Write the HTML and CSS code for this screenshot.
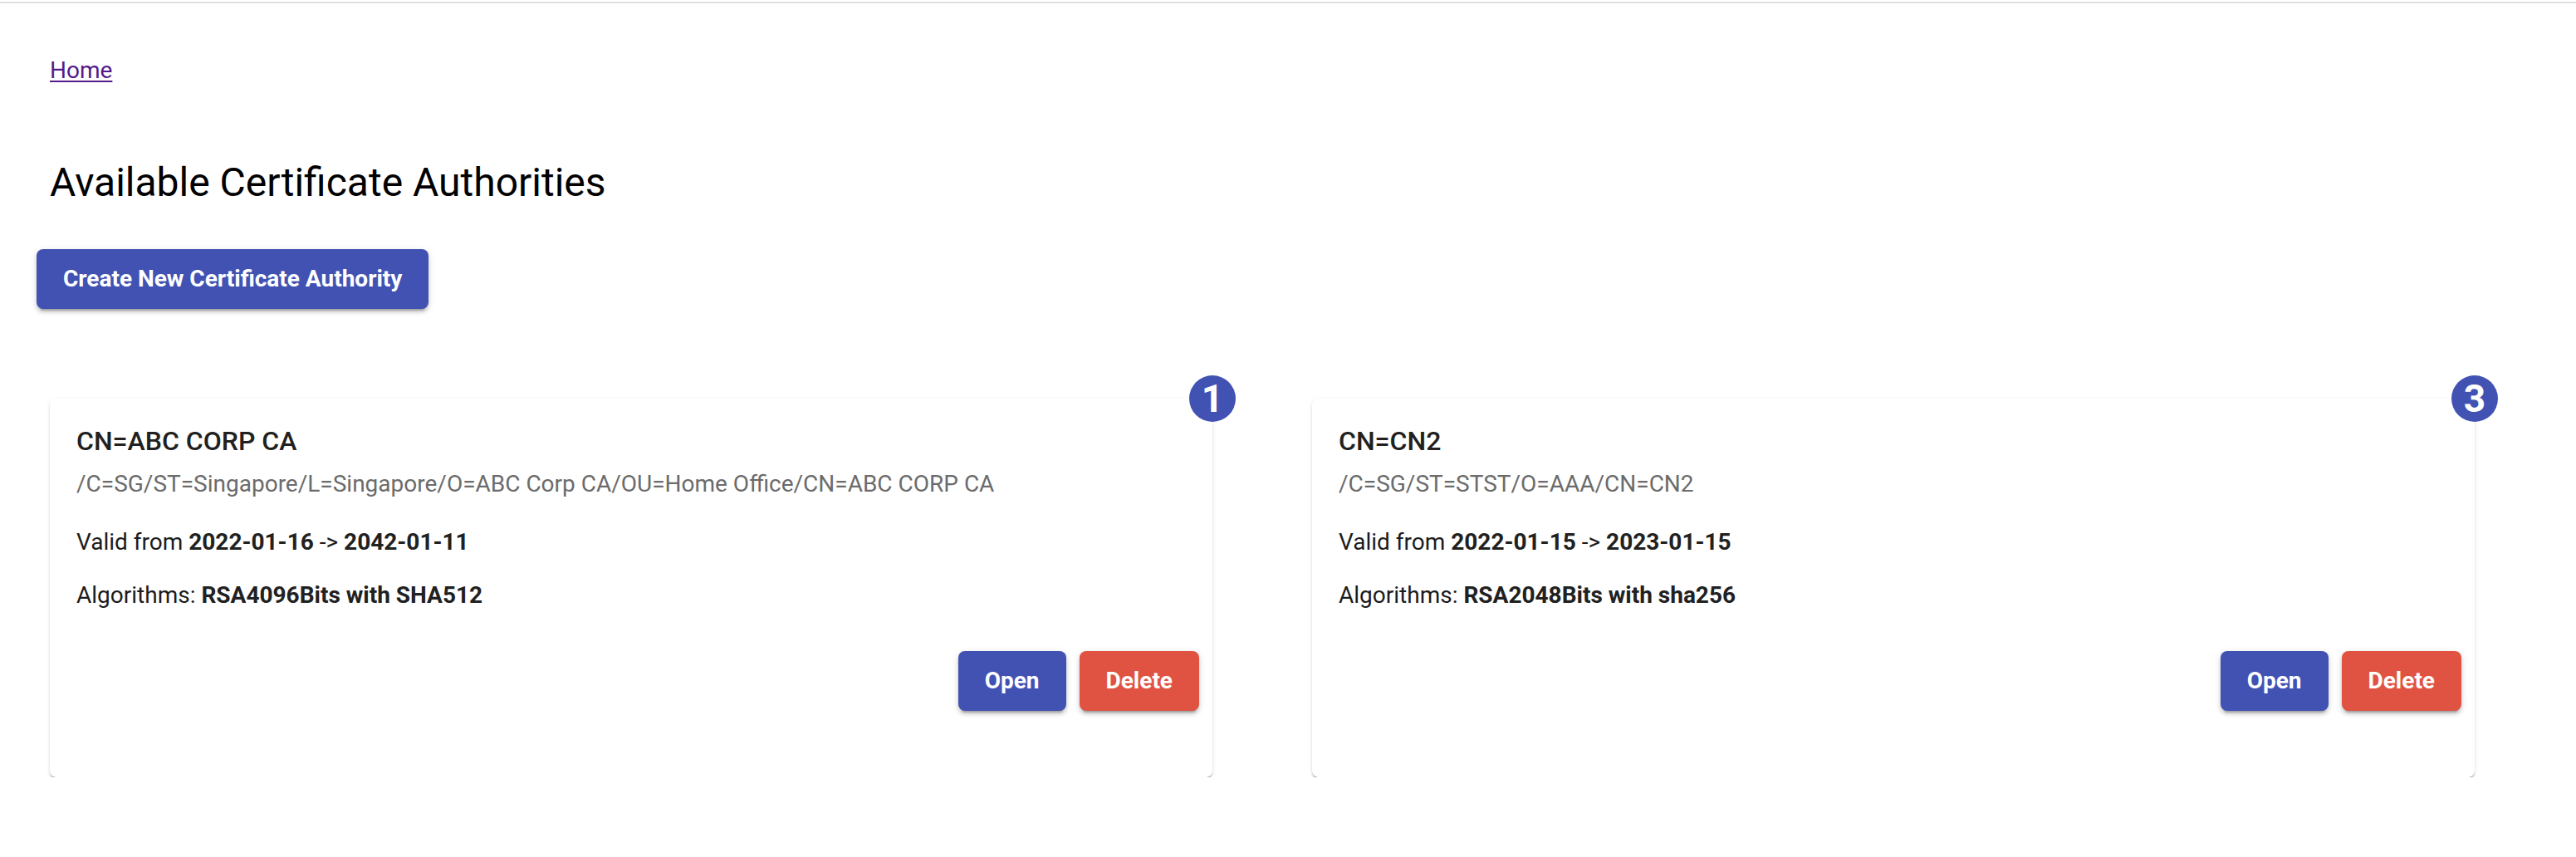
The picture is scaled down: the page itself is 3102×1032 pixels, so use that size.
FILE: index.html
```html
<!DOCTYPE html>
<html lang="en">
<head>
<meta charset="utf-8">
<title>Available Certificate Authorities</title>
<link rel="stylesheet" href="styles.css">
</head>
<body>
<div class="topline"></div>
<main class="page">
  <nav class="breadcrumb"><a class="home-link" href="#">Home</a></nav>
  <h1 class="title">Available Certificate Authorities</h1>
  <button class="btn btn-primary btn-create" type="button">Create New Certificate Authority</button>

  <section class="cards">
    <article class="card">
      <span class="badge">1</span>
      <h2 class="card-title">CN=ABC CORP CA</h2>
      <p class="card-subtitle">/C=SG/ST=Singapore/L=Singapore/O=ABC Corp CA/OU=Home Office/CN=ABC CORP CA</p>
      <p class="card-line line-valid">Valid from <b>2022-01-16</b> -&gt; <b>2042-01-11</b></p>
      <p class="card-line line-algo">Algorithms: <b>RSA4096Bits with SHA512</b></p>
      <div class="card-actions">
        <button class="btn btn-primary" type="button">Open</button>
        <button class="btn btn-danger" type="button">Delete</button>
      </div>
    </article>

    <article class="card">
      <span class="badge">3</span>
      <h2 class="card-title">CN=CN2</h2>
      <p class="card-subtitle">/C=SG/ST=STST/O=AAA/CN=CN2</p>
      <p class="card-line line-valid">Valid from <b>2022-01-15</b> -&gt; <b>2023-01-15</b></p>
      <p class="card-line line-algo">Algorithms: <b>RSA2048Bits with sha256</b></p>
      <div class="card-actions">
        <button class="btn btn-primary" type="button">Open</button>
        <button class="btn btn-danger" type="button">Delete</button>
      </div>
    </article>
  </section>
</main>
</body>
</html>
```

FILE: styles.css
```css
* { box-sizing: border-box; }

html, body {
  margin: 0;
  padding: 0;
  background: #ffffff;
  font-family: Roboto, "Liberation Sans", Arial, sans-serif;
  color: #212121;
}

.topline {
  height: 2px;
  margin-top: 2px;
  background: #e0e0e0;
}

.page {
  padding: 0 122px 0 60px;
}

.breadcrumb {
  margin-top: 64px;
  font-size: 28px;
  line-height: 34px;
}

.home-link {
  color: #551a8b;
  text-decoration: underline;
  text-decoration-thickness: 2px;
  text-underline-offset: 3px;
}

.title {
  margin: 90px 0 0 0;
  font-size: 48px;
  line-height: 56px;
  font-weight: 400;
  color: #000;
}

.btn {
  display: inline-flex;
  align-items: center;
  justify-content: center;
  height: 72px;
  padding: 0 32px;
  border: 0;
  border-radius: 8px;
  font-family: Roboto, "Liberation Sans", Arial, sans-serif;
  font-size: 28px;
  line-height: 72px;
  font-weight: 700;
  white-space: nowrap;
  color: #fff;
  cursor: pointer;
  box-shadow: 0 6px 2px -4px rgba(0,0,0,0.2), 0 4px 4px 0 rgba(0,0,0,0.14), 0 2px 10px 0 rgba(0,0,0,0.12);
}

.btn-primary { background: #4152b3; }
.btn-danger { background: #e05343; }

.btn-create {
  margin: 52px 0 0 -16px;
}

.cards {
  margin-top: 108px;
  display: grid;
  grid-template-columns: 1fr 1fr;
  column-gap: 120px;
}

.card {
  position: relative;
  background: #fff;
  border-radius: 8px;
  padding: 32px 16px 80px 32px;
  box-shadow: 0 4px 2px -2px rgba(0,0,0,0.28), 0 2px 2px 0 rgba(0,0,0,0.16), 0 2px 6px 0 rgba(0,0,0,0.08);
}

.badge {
  position: absolute;
  top: -28px;
  right: -28px;
  width: 56px;
  height: 56px;
  border-radius: 50%;
  background: #4152b3;
  color: #fff;
  font-size: 46px;
  font-weight: 700;
  line-height: 56px;
  text-align: center;
}

.card-title {
  margin: 0;
  font-size: 32px;
  line-height: 38px;
  font-weight: 500;
  color: #212121;
}

.card-subtitle {
  margin: 16px 0 0 0;
  font-size: 28px;
  line-height: 34px;
  color: #6b6b6b;
}

.card-line {
  margin: 0;
  font-size: 28px;
  line-height: 34px;
  color: #1c1c1c;
}

.card-line b { font-weight: 700; color: #212121; }

.line-valid { margin-top: 36px; }
.line-algo { margin-top: 30px; }

.card-actions {
  margin-top: 50px;
  display: flex;
  justify-content: flex-end;
  gap: 16px;
}
```
